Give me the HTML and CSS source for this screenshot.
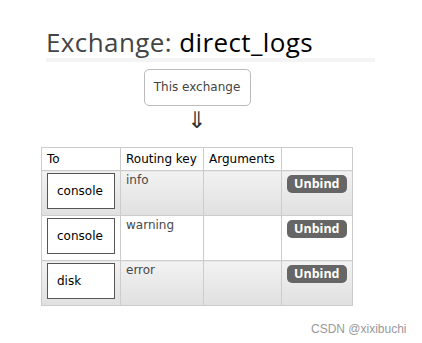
FILE: index.html
```html
<!DOCTYPE html>
<html lang="en">

<head>
    <meta charset="UTF-8">
    <title>Exchange: direct_logs</title>
    <link rel="stylesheet" href="styles.css">
</head>

<body>
    <div class="page">
        <h1 class="title">Exchange: <b>direct_logs</b></h1>
        <div class="strip"></div>

        <div class="bindings">
            <div class="source">This exchange</div>
            <div class="arrow">&#8659;</div>

            <table class="list">
                <thead>
                    <tr>
                        <th class="col-to">To</th>
                        <th class="col-key">Routing key</th>
                        <th class="col-args">Arguments</th>
                        <th class="col-act"></th>
                    </tr>
                </thead>
                <tbody>
                    <tr class="alt1">
                        <td><div class="queue">console</div></td>
                        <td>info</td>
                        <td></td>
                        <td><button class="unbind">Unbind</button></td>
                    </tr>
                    <tr class="alt2">
                        <td><div class="queue">console</div></td>
                        <td>warning</td>
                        <td></td>
                        <td><button class="unbind">Unbind</button></td>
                    </tr>
                    <tr class="alt1">
                        <td><div class="queue">disk</div></td>
                        <td>error</td>
                        <td></td>
                        <td><button class="unbind">Unbind</button></td>
                    </tr>
                </tbody>
            </table>
        </div>
    </div>

    <div class="watermark">CSDN @xixibuchi</div>
</body>

</html>
```

FILE: styles.css
```css
html,
body {
    margin: 0;
    padding: 0;
    background: #fff;
    font-family: "DejaVu Sans", Verdana, sans-serif;
    font-size: 12px;
    color: #484848;
}

.page {
    padding: 26px 0 0 41px;
}

.title {
    margin: 0 0 0 5px;
    font-family: "Open Sans", sans-serif;
    font-weight: normal;
    font-size: 26px;
    letter-spacing: 0.4px;
    line-height: 32px;
    color: #444;
}

.title b {
    font-weight: normal;
    color: #000;
}

.strip {
    height: 4px;
    margin: 0 47px 0 5px;
    background: #f4f4f4;
}

.bindings {
    width: 312px;
    display: flex;
    flex-direction: column;
    align-items: center;
    padding-top: 7px;
}

.source {
    width: 105px;
    height: 35px;
    line-height: 35px;
    text-align: center;
    border: 1px solid #bbb;
    border-radius: 5px;
    color: #444;
}

.arrow {
    font-size: 23px;
    line-height: 26px;
    color: #333;
    margin: 1px 0 14px;
}

.list {
    border-collapse: collapse;
    width: 312px;
}

.list th,
.list td {
    border: 1px solid #ccc;
    padding: 0 5px;
    text-align: left;
    vertical-align: top;
}

.list th {
    font-weight: normal;
    color: #000;
    height: 22px;
    line-height: 22px;
    background: #fff;
}

.col-to {
    width: 68px;
}

.col-key {
    width: 72px;
}

.col-args {
    width: 67px;
}

.list td {
    height: 44px;
    line-height: 18px;
}

.alt1 td {
    background: linear-gradient(#f2f2f2, #e0e0e0);
}

.alt2 td {
    background: #fff;
}

.queue {
    width: 57px;
    height: 34px;
    line-height: 34px;
    margin: 2px 0 0 0;
    padding-left: 9px;
    border: 1px solid #555;
    background: #fff;
    color: #000;
}

.unbind {
    margin-top: 4px;
    border: none;
    border-radius: 5px;
    background: #666;
    color: #fff;
    font-family: "Open Sans", sans-serif;
    font-weight: bold;
    font-size: 12.5px;
    line-height: 16px;
    padding: 1px 7px;
    cursor: pointer;
}

.watermark {
    margin: 16px 0 0 311px;
    font-family: "Liberation Sans", Arial, sans-serif;
    font-size: 12px;
    color: #999;
}
```
